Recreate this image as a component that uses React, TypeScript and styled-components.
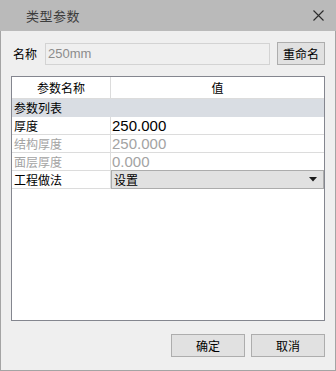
import React from 'react';
import styled, { createGlobalStyle } from 'styled-components';

const GlobalStyle = createGlobalStyle`
  html, body {
    margin: 0;
    padding: 0;
    background: #efefef;
  }
  * {
    box-sizing: border-box;
  }
`;

const FONT = `"Noto Sans CJK SC", "Liberation Sans", sans-serif`;

const Window = styled.div`
  width: 336px;
  height: 371px;
  display: flex;
  flex-direction: column;
  background: #efefef;
  border: 1px solid #a4a4a4;
  border-top: none;
  font-family: ${FONT};
  font-size: 12px;
  color: #000;
`;

const TitleBar = styled.div`
  height: 31px;
  flex: none;
  display: flex;
  align-items: center;
  justify-content: space-between;
  background: #bababa;
  padding: 0 12px 0 26px;
  margin: 0 -1px;
`;

const Title = styled.span`
  font-size: 13px;
  color: #3c3c3c;
  letter-spacing: 0.5px;
`;

const Body = styled.div`
  flex: 1;
  display: flex;
  flex-direction: column;
  padding: 11px 10px 13px 9px;
`;

const NameRow = styled.div`
  display: flex;
  align-items: center;
  gap: 7px;
  height: 23px;
`;

const Label = styled.span`
  width: 28px;
  padding-left: 3px;
  flex: none;
`;

const NameInput = styled.div`
  width: 225px;
  height: 22px;
  border: 1px solid #d3d3d3;
  background: #efefef;
  color: #8c8c8c;
  font-family: "Liberation Sans", sans-serif;
  font-size: 13px;
  display: flex;
  align-items: center;
  padding-left: 2px;
`;

const Button = styled.button<{ $w: number }>`
  width: ${({ $w }) => $w}px;
  height: 23px;
  border: 1px solid #adadad;
  background: #e1e1e1;
  font-family: ${FONT};
  font-size: 12px;
  color: #000;
  padding: 0;
  cursor: default;
`;

const Grid = styled.div`
  margin-top: 11px;
  margin-left: 1px;
  flex: 1;
  background: #fff;
  border: 1px solid #84868f;
  display: flex;
  flex-direction: column;
`;

const Row = styled.div<{ $h: number; $group?: boolean }>`
  height: ${({ $h }) => $h}px;
  display: grid;
  grid-template-columns: 99px 1fr;
  background: ${({ $group }) => ($group ? '#d9dde3' : '#fff')};
  border-bottom: 1px solid ${({ $group }) => ($group ? '#d9dde3' : '#dcdcdc')};
`;

const Cell = styled.div<{ $center?: boolean; $dim?: boolean; $num?: boolean }>`
  display: flex;
  align-items: center;
  justify-content: ${({ $center }) => ($center ? 'center' : 'flex-start')};
  padding-left: ${({ $center, $num }) => ($center ? 0 : $num ? 1 : 2)}px;
  color: ${({ $dim }) => ($dim ? '#a3a3a3' : '#000')};
  font-family: ${({ $num }) => ($num ? `"Liberation Sans", sans-serif` : FONT)};
  font-size: ${({ $num }) => ($num ? 15 : 12)}px;
  border-right: 1px solid #dcdcdc;
  white-space: nowrap;
  overflow: hidden;
  &:last-child {
    border-right: none;
  }
`;

const GroupCell = styled.div`
  grid-column: 1 / 3;
  display: flex;
  align-items: center;
  padding-left: 2px;
`;

const Combo = styled.div`
  display: flex;
  align-items: center;
  justify-content: space-between;
  background: #e1e1e1;
  border: 1px solid #acacac;
  padding: 0 6px 0 2px;
  margin: -1px 0 -1px 0;
`;

const Footer = styled.div`
  display: flex;
  justify-content: flex-end;
  gap: 6px;
  margin-top: 13px;
`;

const CloseIcon = () => (
  <svg width="11" height="11" viewBox="0 0 11 11">
    <path d="M0.5 0.5 L10.5 10.5 M10.5 0.5 L0.5 10.5" stroke="#2b2b2b" strokeWidth="1.1" />
  </svg>
);

const ArrowDown = () => (
  <svg width="8" height="5" viewBox="0 0 8 5">
    <path d="M0 0 H8 L4 4.5 Z" fill="#1a1a1a" />
  </svg>
);

const rows = [
  { name: '厚度', value: '250.000', dim: false },
  { name: '结构厚度', value: '250.000', dim: true },
  { name: '面层厚度', value: '0.000', dim: true },
];

const App: React.FC = () => {
  return (
    <>
      <GlobalStyle />
      <Window>
        <TitleBar>
          <Title>类型参数</Title>
          <CloseIcon />
        </TitleBar>
        <Body>
          <NameRow>
            <Label>名称</Label>
            <NameInput>250mm</NameInput>
            <Button $w={48}>重命名</Button>
          </NameRow>

          <Grid>
            <Row $h={22}>
              <Cell $center>参数名称</Cell>
              <Cell $center>值</Cell>
            </Row>
            <Row $h={18} $group>
              <GroupCell>参数列表</GroupCell>
            </Row>
            {rows.map((r) => (
              <Row $h={18} key={r.name}>
                <Cell $dim={r.dim}>{r.name}</Cell>
                <Cell $dim={r.dim} $num>{r.value}</Cell>
              </Row>
            ))}
            <Row $h={18}>
              <Cell>工程做法</Cell>
              <Combo>
                <span>设置</span>
                <ArrowDown />
              </Combo>
            </Row>
          </Grid>

          <Footer>
            <Button $w={74}>确定</Button>
            <Button $w={74}>取消</Button>
          </Footer>
        </Body>
      </Window>
    </>
  );
};

export default App;
